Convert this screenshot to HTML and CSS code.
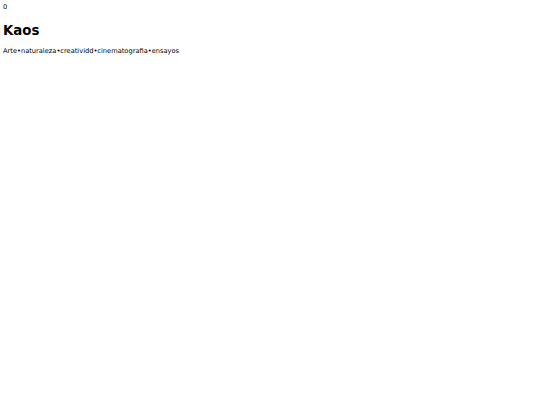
FILE: index.html
```html
<!DOCTYPE html>
<html>
<head>
<meta charset="utf-8">
<link rel="stylesheet" href="styles.css">
</head>
<body>
<div class="counter">0</div>
<h1 class="title">Kaos</h1>
<p class="tags">Arte•naturaleza•creatividd•cinematografia•ensayos</p>
</body>
</html>
```
FILE: styles.css
```css
body {
  margin: 3px;
  font-family: "DejaVu Sans", sans-serif;
  font-size: 6.67px;
  color: #000;
  background: #fff;
}
.counter {
  margin: 0;
  padding-bottom: 3px;
}
.title {
  font-size: 2em;
  font-weight: bold;
  margin: 0.67em 0;
}
.tags {
  margin: 1em 0;
}
```
